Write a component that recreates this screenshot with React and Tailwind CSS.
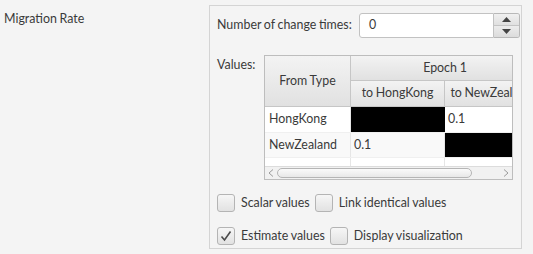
import React from "react";

const Checkbox = ({ checked }) => (
  <div className="w-[18px] h-[18px] shrink-0 rounded-[3px] border border-[#b4b4b4] bg-gradient-to-b from-[#f6f6f6] to-[#e2e2e2] flex items-center justify-center">
    {checked && (
      <svg width="14" height="14" viewBox="0 0 14 14">
        <path d="M2.5 7.5 L5.5 11 L11.5 2.5" fill="none" stroke="#4a4a4a" strokeWidth="1.6" />
      </svg>
    )}
  </div>
);

const CheckRow = ({ items }) => (
  <div className="flex items-center h-[18px]">
    {items.map((it, i) => (
      <div key={i} className="flex items-center">
        <Checkbox checked={it.checked} />
        <span className="ml-[6px] mr-[5px] whitespace-nowrap">{it.label}</span>
      </div>
    ))}
  </div>
);

const HeaderCell = ({ className, children }) => (
  <div className={`flex items-center justify-center whitespace-nowrap bg-gradient-to-b from-[#f3f3f3] to-[#e1e1e1] border-[#c6c6c6] ${className}`}>
    {children}
  </div>
);

const App = () => {
  return (
    <div
      className="w-[533px] h-[254px] overflow-hidden bg-[#f4f4f4] flex text-[12.4px] text-[#3a3a3a] [word-spacing:-0.5px]"
      style={{ fontFamily: "Lato, 'Liberation Sans', sans-serif" }}
    >
      <div className="w-[209px] shrink-0 pl-[4px] pt-[10px]">Migration Rate</div>

      <div className="mt-[5px] w-[313px] h-[244px] shrink-0 border border-[#d4d4d4] pt-[7px] pl-[7px]">
        {/* spinner row */}
        <div className="flex items-center h-[25px]">
          <div className="w-[142px] shrink-0 whitespace-nowrap">Number of change times:</div>
          <div className="flex w-[161px] h-[25px]">
            <div className="flex-1 bg-white border border-[#c2c2c2] rounded-l-[3px] pl-[9px] flex items-center">0</div>
            <div className="w-[26px] flex flex-col border border-l-0 border-[#b8b8b8] rounded-r-[3px] overflow-hidden">
              <div className="flex-1 flex items-center justify-center bg-gradient-to-b from-[#f0f0f0] to-[#e0e0e0] border-b border-[#c4c4c4]">
                <svg width="9" height="5" viewBox="0 0 9 5"><path d="M0 5 L4.5 0 L9 5 Z" fill="#444" /></svg>
              </div>
              <div className="flex-1 flex items-center justify-center bg-gradient-to-b from-[#ececec] to-[#dcdcdc]">
                <svg width="9" height="5" viewBox="0 0 9 5"><path d="M0 0 L4.5 5 L9 0 Z" fill="#444" /></svg>
              </div>
            </div>
          </div>
        </div>

        {/* values row */}
        <div className="flex mt-[17px]">
          <div className="w-[47px] shrink-0 pt-[1px]">Values:</div>
          <div className="w-[249px] h-[125px] border border-[#bdbdbd] bg-white flex flex-col overflow-hidden">
            <div className="flex h-[51px] shrink-0">
              <HeaderCell className="w-[86px] shrink-0 border-r border-b">From Type</HeaderCell>
              <div className="w-[188px] shrink-0 flex flex-col">
                <HeaderCell className="h-[25px] border-b">Epoch 1</HeaderCell>
                <div className="flex h-[26px]">
                  <HeaderCell className="w-[94px] border-r border-b">to HongKong</HeaderCell>
                  <HeaderCell className="w-[94px] border-r border-b">to NewZealand</HeaderCell>
                </div>
              </div>
            </div>
            <div className="flex h-[26px] shrink-0 bg-white border-b border-[#f0f0f0]">
              <div className="w-[86px] shrink-0 pl-[4px] flex items-center border-r border-[#e6e6e6]">HongKong</div>
              <div className="w-[94px] shrink-0 bg-black"></div>
              <div className="w-[94px] shrink-0 pl-[3px] flex items-center">0.1</div>
            </div>
            <div className="flex h-[25px] shrink-0 bg-[#f9f9f9] border-b border-[#f0f0f0]">
              <div className="w-[86px] shrink-0 pl-[4px] flex items-center border-r border-[#e6e6e6]">NewZealand</div>
              <div className="w-[94px] shrink-0 pl-[3px] flex items-center border-r border-[#e6e6e6]">0.1</div>
              <div className="w-[94px] shrink-0 bg-black"></div>
            </div>
            <div className="flex h-[8px] shrink-0 bg-white">
              <div className="w-[86px] shrink-0 border-r border-[#e6e6e6]"></div>
              <div className="w-[94px] shrink-0 border-r border-[#e6e6e6]"></div>
            </div>
            <div className="h-[13px] shrink-0 bg-[#f1f1f1] border-t border-[#dcdcdc] flex items-center">
              <svg className="ml-[3px]" width="6" height="8" viewBox="0 0 6 8"><path d="M5 0.5 L1 4 L5 7.5" fill="none" stroke="#9a9a9a" strokeWidth="1" /></svg>
              <div className="ml-[3px] w-[195px] h-[10px] rounded-full border border-[#b5b5b5] bg-gradient-to-b from-[#fafafa] to-[#e8e8e8]"></div>
              <svg className="ml-auto mr-[3px]" width="6" height="8" viewBox="0 0 6 8"><path d="M1 0.5 L5 4 L1 7.5" fill="none" stroke="#9a9a9a" strokeWidth="1" /></svg>
            </div>
          </div>
        </div>

        {/* checkbox rows */}
        <div className="mt-[14px] flex flex-col gap-[15px]">
          <CheckRow items={[{ label: "Scalar values" }, { label: "Link identical values" }]} />
          <CheckRow items={[{ label: "Estimate values", checked: true }, { label: "Display visualization" }]} />
        </div>
      </div>
    </div>
  );
};

export default App;
